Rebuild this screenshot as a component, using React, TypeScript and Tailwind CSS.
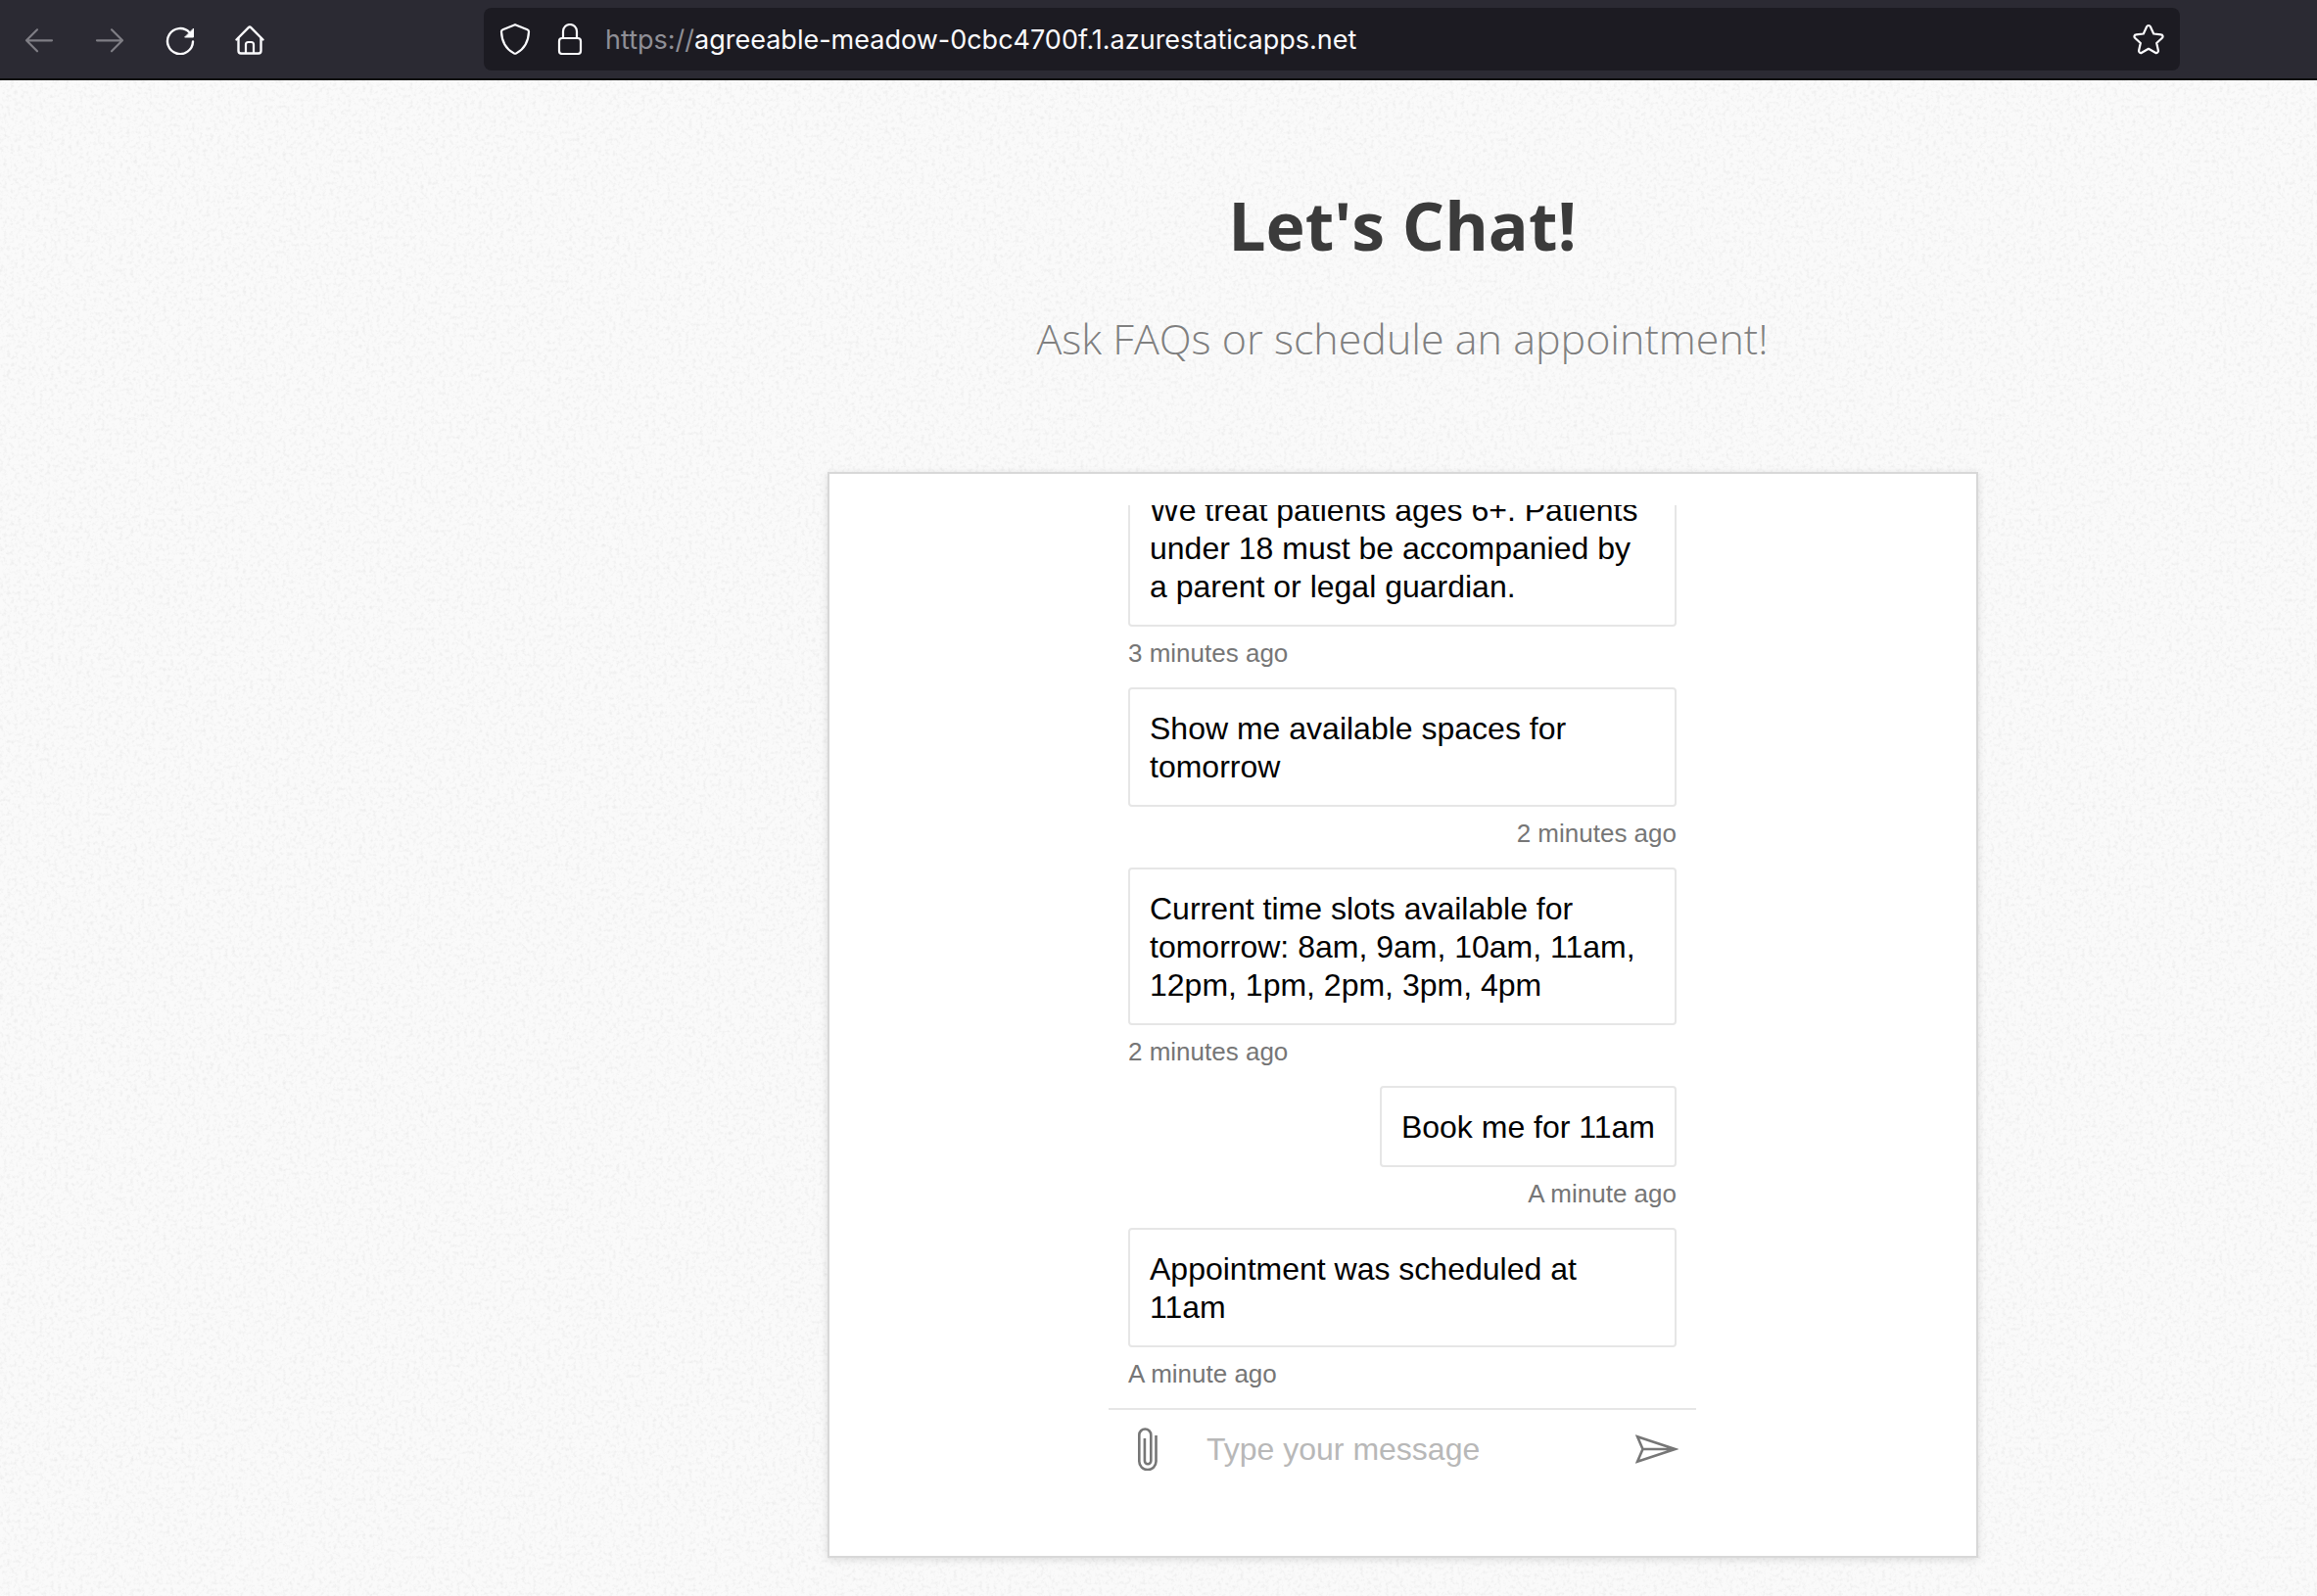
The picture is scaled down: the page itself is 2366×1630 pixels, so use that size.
import type { ReactNode } from "react";

type Message = { text: string; time: string; mine?: boolean };

const messages: Message[] = [
  {
    text: "We treat patients ages 6+. Patients under 18 must be accompanied by a parent or legal guardian.",
    time: "3 minutes ago",
  },
  { text: "Show me available spaces for tomorrow", time: "2 minutes ago", mine: true },
  {
    text: "Current time slots available for tomorrow: 8am, 9am, 10am, 11am, 12pm, 1pm, 2pm, 3pm, 4pm",
    time: "2 minutes ago",
  },
  { text: "Book me for 11am", time: "A minute ago", mine: true },
  { text: "Appointment was scheduled at 11am", time: "A minute ago" },
];

function LineIcon({ children }: { children: ReactNode }) {
  return (
    <svg
      viewBox="0 0 32 32"
      className="size-8 shrink-0"
      fill="none"
      stroke="currentColor"
      strokeWidth="2.2"
      strokeLinecap="round"
      strokeLinejoin="round"
      aria-hidden="true"
    >
      {children}
    </svg>
  );
}

function Toolbar() {
  return (
    <header className="flex h-[82px] items-center border-b-2 border-[#0c0c0d] bg-[#2b2a33] pr-[140px] pl-6 text-[#fbfbfe]">
      <nav className="mr-[222px] flex gap-10">
        <button type="button" aria-label="Back" className="text-[#7f7e85]">
          <LineIcon>
            <path d="M29 17.300H3.500M14 6.300 3 17.300l11 11" />
          </LineIcon>
        </button>
        <button type="button" aria-label="Forward" className="text-[#7f7e85]">
          <LineIcon>
            <path d="M3 17.300h25.500M18 6.300l11 11-11 11" />
          </LineIcon>
        </button>
        <button type="button" aria-label="Reload">
          <LineIcon>
            <path d="M25.500 9.200A13 13 0 1 0 29 18.500" strokeWidth="2.400" />
            <path d="M29.500 5.500v8.500H21z" fill="currentColor" strokeWidth="1" />
          </LineIcon>
        </button>
        <button type="button" aria-label="Home">
          <LineIcon>
            <path d="M1.500 16.500 13.800 4.200a1.700 1.700 0 0 1 2.400 0L28.500 16.500" strokeWidth="2.400" />
            <path d="M3.500 15v13a2.500 2.500 0 0 0 2.500 2.500h18a2.500 2.500 0 0 0 2.500-2.500V15" strokeWidth="2.400" />
            <path d="M11 30v-8.500a2.500 2.500 0 0 1 2.500-2.500h3a2.500 2.500 0 0 1 2.500 2.500V30" />
          </LineIcon>
        </button>
      </nav>
      <div className="flex h-16 flex-1 items-center rounded-lg bg-[#1c1b22] px-4">
        <button type="button" aria-label="Tracking protection" className="mr-6">
          <LineIcon>
            <path d="M16 1.200 28.500 6.300c1 .4 1.600 1.200 1.500 2.200C29.600 18 25.500 26 17.300 30.400a2.700 2.700 0 0 1-2.600 0C6.500 26 2.400 18 2 8.500c-.1-1 .5-1.800 1.500-2.200z" />
          </LineIcon>
        </button>
        <button type="button" aria-label="Site information" className="mr-5">
          <LineIcon>
            <rect x="5" y="15" width="22" height="16" rx="3" />
            <path d="M9 15V8a7 7 0 0 1 14 0v7" />
          </LineIcon>
        </button>
        <p className="flex-1 pt-0.5 font-['Inter',sans-serif] text-[27px] leading-9">
          <span className="text-[#8f8f96]">https://</span>
          <span>agreeable-meadow-0cbc4700f.1.azurestaticapps.net</span>
        </p>
        <button type="button" aria-label="Bookmark this page">
          <LineIcon>
            <path d="M14.100 3.200a2.100 2.100 0 0 1 3.800 0l3.300 7.300 7.600.9a1.900 1.900 0 0 1 1.100 3.300l-5.700 5.300 1.700 7.600a2 2 0 0 1-3 2.100L16 25.800l-6.900 3.900a2 2 0 0 1-3-2.100l1.700-7.600-5.700-5.300a1.900 1.900 0 0 1 1.100-3.300l7.600-.9z" />
          </LineIcon>
        </button>
      </div>
    </header>
  );
}

function PaperTexture() {
  return (
    <svg className="pointer-events-none absolute inset-0 -z-10 size-full" aria-hidden="true">
      <filter id="paper" x="0" y="0" width="100%" height="100%">
        <feTurbulence type="fractalNoise" baseFrequency="0.27" numOctaves="3" seed="4" />
        <feColorMatrix values="0 0 0 0 0.8  0 0 0 0 0.8  0 0 0 0 0.8  1.6 0 0 0 -0.75" />
      </filter>
      <rect width="100%" height="100%" filter="url(#paper)" />
    </svg>
  );
}

function Bubble({ text, time, mine }: Message) {
  return (
    <li className={mine ? "flex flex-col items-end" : "flex flex-col items-start"}>
      <p
        className={
          mine
            ? "rounded border-2 border-[#e6e6e6] bg-white px-5 pt-[21px] pb-[19px] text-[32px] leading-[39px] text-black"
            : "w-full rounded border-2 border-[#e6e6e6] bg-white px-5 pt-[21px] pb-[19px] text-[32px] leading-[39px] text-black"
        }
      >
        {text}
      </p>
      <time className="pt-2 pb-4 text-[26px] leading-[38px] text-[#767676]">{time}</time>
    </li>
  );
}

function Composer() {
  return (
    <form className="flex h-[82px] items-center border-t-2 border-[#e6e6e6]" onSubmit={(e) => e.preventDefault()}>
      <button type="button" aria-label="Upload file" className="flex size-20 items-center justify-center text-[#767676]">
        <svg viewBox="0 0 20 44" className="h-11 w-5" fill="none" stroke="currentColor" strokeWidth="2.600" aria-hidden="true">
          <path d="M18.500 8v26.500a8.500 8.500 0 0 1-17.200 0V7.500a6 6 0 0 1 12 0V34a3.200 3.200 0 0 1-6.400 0V11" />
        </svg>
      </button>
      <input
        type="text"
        aria-label="Type your message"
        placeholder="Type your message"
        className="min-w-0 flex-1 bg-transparent px-5 text-[32px] leading-[39px] text-black outline-none placeholder:text-[#b8b8b8]"
      />
      <button type="submit" aria-label="Send" className="flex size-20 items-center justify-center text-[#767676]">
        <svg viewBox="0 0 44 30" className="h-[30px] w-11" fill="none" stroke="currentColor" strokeWidth="2.600" aria-hidden="true">
          <path d="M2 2.200 40.500 15 2 27.800 7.500 15zM7.500 15h33" />
        </svg>
      </button>
    </form>
  );
}

export default function App() {
  return (
    <div className="flex min-h-screen flex-col overflow-hidden bg-[#fafafa]">
      <Toolbar />
      <main className="relative isolate flex flex-1 flex-col items-center pb-9 pl-[498px]">
        <PaperTexture />
        <h1 className="mt-[98px] font-['Open_Sans',sans-serif] text-[68px] leading-[100px] font-bold text-[#3b3b3b] [text-shadow:0_2px_0_#fff]">
          Let's Chat!
        </h1>
        <h2 className="mt-9 font-['Open_Sans',sans-serif] text-[43px] leading-[60px] font-light text-[#808080] [text-shadow:0_2px_0_#fff]">
          Ask FAQs or schedule an appointment!
        </h2>
        <section className="mt-[106px] flex w-full max-w-[1175px] flex-col items-center border-2 border-[#d8d8d8] bg-white pt-8 pb-[69px] shadow-[0_2px_8px_rgba(0,0,0,0.12)]">
          <div className="w-full max-w-[600px] font-['Liberation_Sans',Arial,sans-serif]">
            <ul className="flex h-[922px] flex-col justify-end overflow-hidden px-5">
              {messages.map((message) => (
                <Bubble key={message.text} {...message} />
              ))}
            </ul>
            <Composer />
          </div>
        </section>
      </main>
    </div>
  );
}
